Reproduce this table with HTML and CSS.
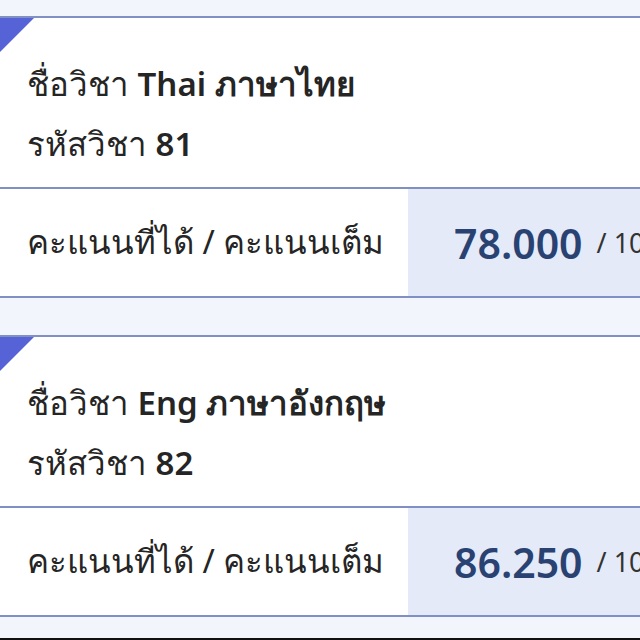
FILE: index.html
```html
<!DOCTYPE html>
<html lang="th">
<head>
<meta charset="utf-8">
<title>ผลการเรียน</title>
<link rel="stylesheet" href="styles.css">
</head>
<body>
<div class="list">
  <section class="card">
    <span class="corner"></span>
    <div class="card-head">
      <div class="line">ชื่อวิชา <b>Thai ภาษาไทย</b></div>
      <div class="line">รหัสวิชา <b>81</b></div>
    </div>
    <div class="score-row">
      <div class="score-label">คะแนนที่ได้ / คะแนนเต็ม</div>
      <div class="score-value"><span class="got">78.000</span><span class="full">/ 100</span></div>
    </div>
  </section>
  <section class="card">
    <span class="corner"></span>
    <div class="card-head">
      <div class="line">ชื่อวิชา <b>Eng ภาษาอังกฤษ</b></div>
      <div class="line">รหัสวิชา <b>82</b></div>
    </div>
    <div class="score-row">
      <div class="score-label">คะแนนที่ได้ / คะแนนเต็ม</div>
      <div class="score-value"><span class="got">86.250</span><span class="full">/ 100</span></div>
    </div>
  </section>
</div>
<div class="bottom-bar"></div>
</body>
</html>
```

FILE: styles.css
```css
html, body {
  margin: 0;
  padding: 0;
}
body {
  background: #f2f5fb;
  font-family: "Noto Sans", "Open Sans", "DejaVu Sans", sans-serif;
  color: #252525;
  width: 640px;
  height: 640px;
  overflow: hidden;
  display: flex;
  flex-direction: column;
}
.list {
  padding-top: 16px;
  display: flex;
  flex-direction: column;
  gap: 37px;
}
.card {
  position: relative;
  background: #fff;
  border-top: 2px solid #8190c4;
  border-bottom: 2px solid #8190c4;
}
.corner {
  position: absolute;
  left: 0;
  top: 0;
  width: 0;
  height: 0;
  border-top: 34px solid #5563d6;
  border-right: 34px solid transparent;
}
.card-head {
  height: 169px;
  box-sizing: border-box;
  padding: 22px 0 0 27px;
  display: flex;
  flex-direction: column;
  justify-content: center;
  gap: 12px;
}
.line {
  font-size: 33px;
  line-height: 48px;
  white-space: nowrap;
}
.line b {
  font-weight: 600;
}
.score-row {
  border-top: 2px solid #8190c4;
  height: 107px;
  display: grid;
  grid-template-columns: 408px 1fr;
}
.score-label {
  display: flex;
  align-items: center;
  padding-left: 27px;
  font-size: 33px;
  white-space: nowrap;
}
.score-value {
  background: #e4eaf8;
  display: flex;
  align-items: center;
  padding-left: 46px;
  white-space: nowrap;
  overflow: hidden;
}
.got {
  font-size: 41px;
  font-weight: 600;
  color: #2a4272;
}
.full {
  font-size: 27px;
  color: #333;
  margin-left: 14px;
}
.bottom-bar {
  margin-top: auto;
  height: 2px;
  background: #111;
}
```
